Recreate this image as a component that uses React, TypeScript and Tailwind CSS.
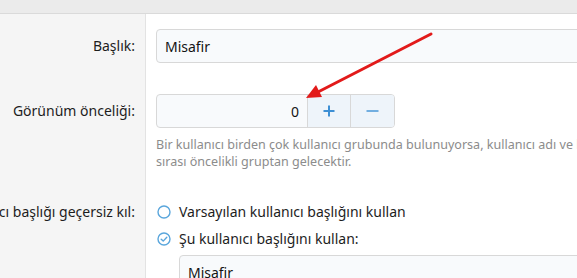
import React from "react";

const font = { fontFamily: "'Noto Sans', 'Open Sans', sans-serif" };

const RadioIcon: React.FC<{ checked?: boolean }> = ({ checked }) => (
  <svg width="14" height="14" viewBox="0 0 14 14" className="shrink-0">
    <circle cx="7" cy="7" r="6" fill="none" stroke="#5aa6dc" strokeWidth="1.4" />
    {checked && (
      <path d="M4.2 7.2 L6.2 9.1 L9.8 5.2" fill="none" stroke="#5aa6dc" strokeWidth="1.4" strokeLinecap="round" strokeLinejoin="round" />
    )}
  </svg>
);

const Label: React.FC<{ children: React.ReactNode; className?: string }> = ({ children, className }) => (
  <div className={"w-[146px] shrink-0 bg-[#f5f5f5] border-r border-[#e3e3e3] flex justify-end pr-[10px] whitespace-nowrap text-[#1d1d1d] " + (className ?? "")}>
    {children}
  </div>
);

export default function App() {
  return (
    <div className="relative w-[577px] h-[278px] overflow-hidden bg-white text-[14px]" style={font}>
      <div className="h-[14px] bg-[#ebebeb] border-b border-[#dadada]" />

      {/* Başlık */}
      <div className="flex">
        <Label className="pt-[15px] pb-[15px]">
          <span className="leading-[34px]">Başlık:</span>
        </Label>
        <div className="pl-[10px] pt-[15px] pb-[15px] flex-1">
          <div className="h-[34px] w-[600px] rounded-[4px] border border-[#d8d8d8] bg-[#f8fafc] px-[8px] flex items-center text-[#141414]">
            Misafir
          </div>
        </div>
      </div>

      {/* Görünüm önceliği */}
      <div className="flex">
        <Label className="pt-[16px] pb-[28px]">
          <span className="leading-[34px]">Görünüm önceliği:</span>
        </Label>
        <div className="pl-[10px] pt-[16px] pb-[28px] flex-1">
          <div className="flex h-[34px] w-[239px] rounded-[4px] border border-[#d8d8d8] bg-[#f8fafc] overflow-hidden">
            <div className="w-[150px] flex items-center justify-end pr-[8px] text-[#141414]">0</div>
            <div className="w-[43px] border-l border-[#d8d8d8] bg-[#eef4fa] flex items-center justify-center">
              <svg width="12" height="12" viewBox="0 0 12 12">
                <path d="M6 0.5 V11.5 M0.5 6 H11.5" stroke="#3d8fd4" strokeWidth="2" />
              </svg>
            </div>
            <div className="flex-1 border-l border-[#d8d8d8] bg-[#eef4fa] flex items-center justify-center">
              <svg width="13" height="12" viewBox="0 0 13 12">
                <path d="M0.5 6 H12.5" stroke="#72aee0" strokeWidth="2" />
              </svg>
            </div>
          </div>
          <div className="mt-[8px] text-[12.55px] leading-[17px] text-[#8c8c8c] whitespace-nowrap">
            <div>Bir kullanıcı birden çok kullanıcı grubunda bulunuyorsa, kullanıcı adı ve kullanıcı başlığı</div>
            <div>sırası öncelikli gruptan gelecektir.</div>
          </div>
        </div>
      </div>

      {/* Kullanıcı başlığı geçersiz kıl */}
      <div className="flex">
        <Label className="pb-[30px]">
          <span className="leading-[27px]">Kullanıcı başlığı geçersiz kıl:</span>
        </Label>
        <div className="pl-[11px] flex-1 text-[#1d1d1d]">
          <div className="h-[27px] flex items-center gap-[8px]">
            <RadioIcon />
            <span>Varsayılan kullanıcı başlığını kullan</span>
          </div>
          <div className="h-[27px] flex items-center gap-[8px]">
            <RadioIcon checked />
            <span>Şu kullanıcı başlığını kullan:</span>
          </div>
          <div className="ml-[22px] mt-[3px] h-[34px] w-[600px] rounded-[4px] border border-[#d8d8d8] bg-[#f8fafc] px-[8px] flex items-center text-[#141414]">
            Misafir
          </div>
        </div>
      </div>

      {/* annotation arrow */}
      <svg className="absolute left-0 top-0 pointer-events-none" width="577" height="278">
        <line x1="431" y1="34" x2="318" y2="92" stroke="#e21a1a" strokeWidth="3" strokeLinecap="round" />
        <polygon points="306,98 316,85 322,97" fill="#e21a1a" />
      </svg>
    </div>
  );
}
